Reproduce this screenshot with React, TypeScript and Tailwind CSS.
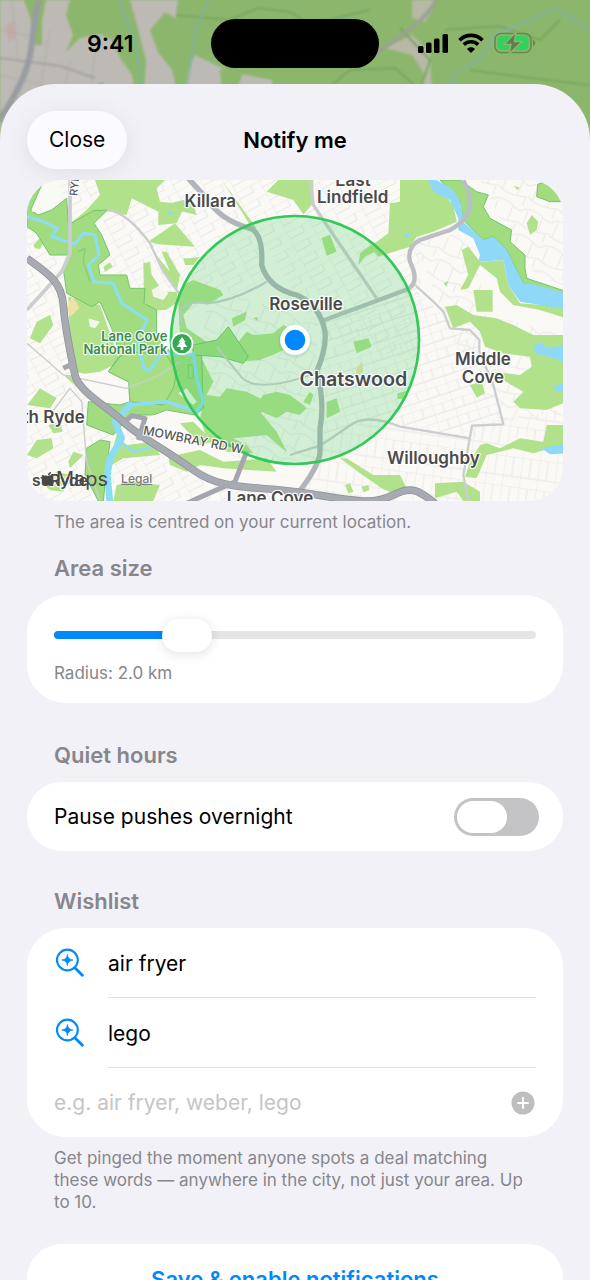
import React, { useState } from 'react';
import { FaApple } from 'react-icons/fa';

const STREET = '#e8e8e6';

const StatusMap: React.FC = () => (
  <svg viewBox="0 0 590 200" preserveAspectRatio="xMidYMin slice" className="absolute inset-x-0 top-0 h-[200px] w-full blur-[1px]" aria-hidden="true">
    <rect width="590" height="200" fill="#8db66d" />
    <path d="M0 0H178L175 22L195 55L230 72L272 80V200H0Z" fill="#bdbab5" />
    <path d="M0 75L90 96 M12 0L18 60 M50 30L40 90 M70 60L64 95 M95 50L90 95 M0 30L30 36" fill="none" stroke="#b0aeaa" strokeWidth="1" />
    <path d="M24 0H46L42 22V45H36L31 20Z M70 0H130L137 25L146 60L144 95H135L132 75L120 58L112 40L100 34L80 38L66 52L73 35L66 15Z" fill="#8db66d" />
    <path d="M150 30L165 12L178 20L195 20L212 36L195 55L188 70L185 95H178L172 70L158 52Z M220 70L245 68L235 95H222Z M96 84L104 82L102 88Z" fill="#8db66d" />
    <path d="M412 0H438L425 22L412 18Z M385 48L412 35L430 52L432 95H418L425 75L412 55Z" fill="#b7b8a6" />
    <path d="M176 15L230 20L258 8L290 12L310 24L370 10 M400 28L430 60L420 90 M470 70L530 78L590 85 M445 30L500 26L540 40L560 20 M320 95L350 70L395 68L420 90" fill="none" stroke="#78a75f" strokeWidth="2" />
    <path d="M118 0L135 40L143 95 M208 0L196 30L185 95 M590 30L555 8L535 18L495 35L480 60L452 75L455 95" fill="none" stroke="#80b4a0" strokeWidth="3" opacity="0.7" />
    <path d="M0 58L60 66L95 78" fill="none" stroke="#a3a3a4" strokeWidth="2" />
    <path d="M40 -4C30 28 36 50 22 80S4 112 -4 125" fill="none" stroke="#999ca0" strokeWidth="6" />
    <path d="M438 -4C430 18 402 35 370 58" fill="none" stroke="#9ba294" strokeWidth="4" />
    <path d="M6 25L14 20L16 38L8 42Z" fill="#c6a09c" opacity="0.5" />
  </svg>
);

const StatusBar: React.FC = () => (
  <div className="relative flex h-[84px] items-start justify-between pr-[54px] pl-[87px]">
    <span className="mt-[30px] text-[23px] leading-7 font-semibold text-black">9:41</span>
    <span className="absolute top-[19px] left-1/2 h-[49px] w-[168px] -translate-x-1/2 rounded-full bg-black" />
    <div className="mt-8 flex items-center gap-[10px]">
      <svg width="30" height="20" viewBox="0 0 30 20" aria-hidden="true">
        <rect x="0" y="13" width="5.5" height="7" rx="1.5" />
        <rect x="8" y="9.5" width="5.5" height="10.5" rx="1.5" />
        <rect x="16" y="5.5" width="5.5" height="14.5" rx="1.5" />
        <rect x="24.5" y="1" width="5.5" height="19" rx="1.5" />
      </svg>
      <svg width="26" height="20" viewBox="0 0 26 20" fill="none" stroke="black" aria-hidden="true">
        <path d="M1.5 7.2C8 .8 18 .8 24.5 7.2" strokeWidth="3.6" />
        <path d="M5.8 11.6C10 7.7 16 7.7 20.2 11.6" strokeWidth="3.6" />
        <path d="M13 20L9 16C11 13.8 15 13.8 17 16Z" fill="black" stroke="none" />
      </svg>
      <svg width="42" height="22" viewBox="0 0 42 22" aria-hidden="true">
        <rect x="1" y="1.5" width="36" height="19" rx="6" fill="none" stroke="#67884f" strokeWidth="1.6" />
        <rect x="3.5" y="4" width="31" height="14" rx="4" fill="#32d15c" />
        <path d="M39 8C42 9 42 13 39 14Z" fill="#67884f" />
        <path d="M22 0L10 12.5H17L15 22L28 9.5H20.5Z" fill="#5f7f4c" stroke="#8db66d" strokeWidth="1.4" />
      </svg>
    </div>
  </div>
);

const PLACES = [
  { name: 'Killara', x: 571, y: 96, size: 51 },
  { name: 'East', x: 999, y: 33, size: 51 },
  { name: 'Lindfield', x: 998, y: 84, size: 51 },
  { name: 'Roseville', x: 858, y: 404, size: 51 },
  { name: 'Chatswood', x: 1000, y: 634, size: 59 },
  { name: 'Middle', x: 1389, y: 571, size: 51 },
  { name: 'Cove', x: 1389, y: 625, size: 51 },
  { name: 'Willoughby', x: 1240, y: 867, size: 51 },
  { name: 'th Ryde', x: 101, y: 744, size: 51 },
  { name: 'st Ryde', x: 120, y: 932, size: 47 },
  { name: 'Lane Cove', x: 750, y: 986, size: 51 },
];

const AreaMap: React.FC<{ radius: number }> = ({ radius }) => (
  <div className="relative overflow-hidden rounded-[34px]">
    <svg viewBox="21 15 1608 963" className="block w-full" role="img" aria-label="Map of the area around your location">
      <defs>
        <pattern id="gridA" width="78" height="44" patternUnits="userSpaceOnUse" patternTransform="rotate(-28)">
          <path d="M0 0H78M0 22H50M0 0V44M50 0V22" fill="none" stroke={STREET} strokeWidth="3" />
        </pattern>
        <pattern id="gridB" width="64" height="52" patternUnits="userSpaceOnUse" patternTransform="rotate(-18)">
          <path d="M0 0H64M0 0V52M32 0V30M0 30H64" fill="none" stroke={STREET} strokeWidth="3" />
        </pattern>
        <pattern id="gridC" width="52" height="90" patternUnits="userSpaceOnUse" patternTransform="rotate(8)">
          <path d="M0 0H52M0 0V90M26 0V60M0 60H52" fill="none" stroke={STREET} strokeWidth="3" />
        </pattern>
        <pattern id="gridD" width="96" height="80" patternUnits="userSpaceOnUse" patternTransform="rotate(22)">
          <path d="M0 10Q30 -5 60 10T96 10M0 50Q30 70 96 50M14 10V56M62 10V60M88 56V90" fill="none" stroke={STREET} strokeWidth="3" />
        </pattern>
      </defs>

      <rect x="21" y="15" width="1608" height="963" fill="#faf9f5" />

      {/* residential streets */}
      <path d="M21 15H500L730 200L740 320L480 420L21 300Z" fill="url(#gridA)" />
      <path d="M500 15H1200V330L1190 560L900 480L730 200Z" fill="url(#gridA)" />
      <path d="M900 440L1180 340L1380 520L1450 750L1350 790L1030 730L900 800Z" fill="url(#gridB)" />
      <path d="M560 330L890 440V860L640 850L540 650Z" fill="url(#gridD)" />
      <path d="M890 800L1050 730L1350 790L1330 978H850Z" fill="url(#gridC)" />
      <path d="M1350 750L1640 700V978H1340Z" fill="url(#gridC)" />
      <path d="M1180 200L1350 170L1400 420L1640 480V720L1440 740L1290 460Z" fill="url(#gridD)" />
      <path d="M1380 15H1640V340L1520 280Z" fill="url(#gridD)" />
      <path d="M21 290L130 350L200 660L300 740L500 900L860 978H21Z" fill="url(#gridA)" />

      {/* parks */}
      <g fill="#b1e28b">
        <path d="M225 15L240 60L200 105L145 150L262 108L320 120L335 70L415 110V150L470 145L500 80L460 85L420 80L410 40L435 15Z" />
        <path d="M430 115L470 105L530 120L520 90L490 75L440 88Z" />
        <path d="M465 145L385 200L415 208L525 215Z" />
        <path d="M605 15L710 160L696 165L690 150L615 30Z" />
        <path d="M740 50L775 15H880V85L850 118L820 75Z" />
        <path d="M1140 15H1235L1300 90L1310 140L1240 170L1190 185L1170 215L1075 245L1050 215L1105 175L1110 85L1140 80Z" />
        <path d="M1015 270L1020 235L1060 205L1075 225L1035 245Z" />
        <path d="M905 190L930 180L950 230L920 242Z" />
        <path d="M1325 225L1345 215L1380 260L1450 255L1465 330L1500 385L1640 395V430L1560 405L1480 390L1440 350L1430 310L1380 270L1345 340L1320 345L1345 300Z" />
        <path d="M1360 345H1418V410H1370Z M1275 395L1310 390L1360 420L1430 430L1480 450L1540 480L1640 480V500L1640 680L1580 705L1500 700L1480 680L1510 650L1440 610L1420 590L1500 600L1535 575L1530 545L1450 535L1395 515L1380 470L1350 440L1300 460Z" />
        <path d="M1520 145L1535 120L1555 140L1550 165L1530 180Z M1480 32L1500 38L1492 45Z" />
        <path d="M1270 325L1285 318L1280 335Z M1350 630L1385 620L1395 655L1370 668Z M1580 750H1640V810L1590 820L1540 835L1480 820L1400 840L1370 910L1335 905L1350 860L1380 810L1400 805L1440 820L1500 790L1570 800Z" />
        <path d="M960 850L980 850L1060 900L1140 900L1160 940L1130 960L1085 940L1020 895Z M975 930L990 925L1000 950L985 955Z M1025 935L1045 930L1048 945L1030 952Z M1245 925L1330 920L1380 950V978H1330L1310 950L1245 970Z" />
        <path d="M370 265L390 260L395 300L430 350L470 350L475 380L430 410L390 400L372 380Z M400 230L430 290L470 350L480 300L440 230L425 230L450 290Z M490 250L510 250L540 245L520 270L495 270Z" />
        <path d="M490 330L520 315L600 345L610 360L570 385L520 385L490 420L500 460L560 500L640 520L680 470L700 480L760 475L790 450L810 460L800 520L770 535L720 555L650 560L580 530L540 540L580 620L560 660L600 665L620 640L680 650L740 680L720 720L650 780L600 760L540 700L540 560L480 480L475 380Z" />
        <path d="M635 430L680 410L675 435L640 455Z M700 430L712 425L714 438Z M810 660L850 690L860 700L840 720L800 710L770 730L700 700L730 660L770 650Z M850 680L870 690L880 660L870 650Z" />
        <path d="M550 690L600 700L640 740L720 710L770 770L800 830L780 815L740 780L640 790L680 810L700 835L620 830L560 790L540 730Z M480 745L520 740L580 800L540 810Z" />
        <path d="M250 275L270 262L278 275L255 290Z M40 210L60 190L70 205L60 222L45 220Z M145 365L240 390L300 560L240 590L170 600L150 500Z" />
        <path d="M30 490L50 440L90 420L100 450L60 505Z M130 600L170 600L195 640L170 635Z M22 690L60 640L110 670L90 700L60 695Z M85 750L120 740L128 770L100 775Z M21 840L50 795L95 790L100 820L50 850Z M160 830L190 840L150 880L145 860Z M60 920L110 890L150 900L130 950L90 945Z" />
        <path d="M445 845L540 825L610 860L740 850L770 890L610 880L540 870L500 890L450 870Z M275 870L310 850L420 840L400 800L320 810L290 780L270 850Z M290 930L330 920L420 930L400 978H280Z" />
        <path d="M1000 500L1045 490L1055 515L1010 535Z M920 680L950 670L960 710L920 730Z M1132 655L1158 648L1150 672H1132Z" />
      </g>

      {/* national park */}
      <g fill="#a2dc80" stroke="#74c46c" strokeWidth="3">
        <path d="M65 30L32 105L55 120L95 105L140 70L145 150L220 107L262 105L222 145L245 180L270 240L235 270L240 300L320 300L330 340L375 340L372 385L410 405V480L450 530L490 540H545L550 700L525 720L440 705L400 720L330 720L280 780L200 750L205 680L300 690L330 680L325 620L265 590L300 540L275 460L240 380L215 395L140 355L130 280L145 240L90 240L50 175L21 155V60Z" />
        <path d="M200 820L240 795L270 800L260 880L250 978H235L195 900Z" />
        <path d="M1260 15H1320L1370 50L1405 60L1390 95L1410 130L1475 165L1470 200L1515 240V280L1520 310L1640 350V358L1510 325L1460 225L1420 185L1390 195L1330 135L1320 80Z" />
        <path d="M1553 28L1590 15H1640V80H1590L1550 65Z" />
        <path d="M520 510L590 495L625 455L685 545L670 565L600 545L520 540Z" />
      </g>
      <path d="M155 365L172 385L178 400L150 425L140 400Z M1010 580L1025 560L1030 590L1005 610Z" fill="#eee3a6" />
      <path d="M70 30L35 110L75 108L130 60L110 15Z M205 430L240 440L225 460L210 455Z M415 405H445V460L460 480L440 530L412 480Z M475 655L500 640L530 680L520 690Z M395 345L420 330L445 355L430 375L400 365Z" fill="#faf9f5" opacity="0.9" />
      <path d="M300 545L330 530L440 540L470 590L460 640L430 690L330 680L325 620L265 590Z" fill="#a8df85" stroke="#74c46c" strokeWidth="3" />
      <path d="M165 590L325 622L325 665L270 665L200 650Z" fill="#faf9f5" />
      <path d="M380 725L430 715L480 745L470 800L420 800L375 770Z" fill="#faf9f5" />
      <path d="M505 570H520V610H505Z M175 230L195 220L190 260L210 320" fill="none" stroke="#7cc877" strokeWidth="4" opacity="0.7" />

      {/* water */}
      <g fill="none" stroke="#8ddcf5" strokeLinejoin="round" strokeLinecap="round">
        <path d="M21 125L70 140L112 160L95 185L165 207L190 175L225 180L237 240L205 270L222 320L280 325L305 385L382 435L370 460L350 480L372 580L388 588L425 535L520 540" strokeWidth="9" />
        <path d="M520 535L530 610L550 680L530 710L440 680L330 690" strokeWidth="11" />
        <path d="M330 690L285 740L305 790L270 850L262 900L270 985" strokeWidth="20" />
        <path d="M300 800L340 830L400 815L450 830" strokeWidth="7" />
      </g>
      <g fill="#8fd8f7">
        <path d="M1225 15L1240 50L1290 75L1315 130V165L1360 190L1380 240L1375 260L1450 255L1465 330L1500 380L1640 403V356L1550 330L1510 325L1460 225L1420 185L1390 195L1330 140L1325 90L1300 45L1250 15Z" />
        <path d="M1540 515L1560 500L1580 520L1640 510V565L1600 550L1545 535Z M1600 635L1640 620V650L1610 650Z M1565 820L1640 805V835L1590 838Z M1152 180L1165 172L1172 180L1158 190Z M440 112L455 108L460 118L448 120Z" />
      </g>

      {/* secondary roads */}
      <g fill="none" stroke="#cbcdd1" strokeLinejoin="round">
        <path d="M150 15V235L125 290L21 405" strokeWidth="11" />
        <path d="M262 105Q320 110 390 205L430 290L480 360" strokeWidth="7" />
        <path d="M870 15L880 90L920 150L1070 370" strokeWidth="10" />
        <path d="M1185 330L1240 380L1270 410L1290 460L1350 465L1378 495V530L1420 630L1450 748L1356 752L1330 900L1345 978" strokeWidth="7" />
        <path d="M480 450L485 400Q510 375 560 385Q640 380 740 320" strokeWidth="7" />
        <path d="M810 840L900 812L1000 745Q1050 718 1140 755L1350 790" strokeWidth="7" />
        <path d="M590 515L655 595Q690 655 840 610L900 590" strokeWidth="6" />
        <path d="M21 505L130 600L320 640L420 600L480 560 M90 720L150 640L185 680L200 860L240 978" strokeWidth="4" />
      </g>
      <path d="M900 440L1165 342Q1200 320 1170 260Q1160 215 1200 195L1290 165Q1370 120 1345 50L1330 15" fill="none" stroke="#bbbfc3" strokeWidth="13" />
      <path d="M505 10L560 70Q600 135 690 160Q730 175 725 270Q745 340 830 360Q900 390 915 470Q920 520 890 590Q915 680 900 760V830Q900 870 830 960" fill="none" stroke="#b1b5bb" strokeWidth="16" />

      {/* motorways */}
      <g fill="none" strokeLinejoin="round">
        <path d="M21 250C75 290 125 315 130 390S155 550 165 600S270 700 310 740S430 820 520 885S700 930 860 955S1060 990 1120 960S1200 950 1245 985" stroke="#92949c" strokeWidth="23" />
        <path d="M130 580L150 570L170 610 M320 735L335 722L375 730L355 795 M680 830L645 920L500 985" stroke="#a4a6ae" strokeWidth="15" />
        <path d="M21 250C75 290 125 315 130 390S155 550 165 600S270 700 310 740S430 820 520 885S700 930 860 955S1060 990 1120 960S1200 950 1245 985" stroke="#a8aab2" strokeWidth="18" />
      </g>

      <circle cx="825" cy="495" r={radius * 186} fill="#34c759" fillOpacity="0.2" stroke="#34c759" strokeWidth="8" />

      <g fontFamily="Inter, sans-serif" paintOrder="stroke" stroke="#ffffff" strokeOpacity="0.85" strokeLinejoin="round">
        {PLACES.map((p) => (
          <text key={p.name} x={p.x} y={p.y} fontSize={p.size} fontWeight="600" textAnchor="middle" fill="#4a4a4c" strokeWidth="8">
            {p.name}
          </text>
        ))}
        <g fontSize="39" fontWeight="600" textAnchor="end" fill="#378c50" strokeWidth="7">
          <text x="442" y="498">Lane Cove</text>
          <text x="442" y="538">National Park</text>
        </g>
        <text fontSize="37" fontWeight="500" fill="#58585b" strokeWidth="7" transform="translate(368 778) rotate(11)">MOWBRAY RD W</text>
        <text fontSize="33" fontWeight="500" fill="#58585b" strokeWidth="7" transform="translate(172 64) rotate(-84)">RYDE</text>
      </g>

      <circle cx="486" cy="506" r="34" fill="#fff" />
      <circle cx="486" cy="506" r="29" fill="#34a853" />
      <path d="M486 486L497 502H492L502 516H490V525H482V516H470L480 502H475Z" fill="#fff" />

      <circle cx="825" cy="499" r="50" fill="#000" opacity="0.06" />
      <circle cx="825" cy="495" r="45" fill="#fff" />
      <circle cx="825" cy="495" r="31" fill="#0088ff" />
    </svg>
    <div className="absolute bottom-2 left-[13px] flex items-center text-[#48484a]">
      <FaApple className="h-4 w-4" />
      <span className="text-xl leading-7">Maps</span>
      <a href="#legal" className="ml-[13px] text-xs font-medium text-[#7c7c80] underline">Legal</a>
    </div>
  </div>
);

const SearchSparkle: React.FC = () => (
  <svg width="30" height="30" viewBox="0 0 30 30" className="shrink-0 text-[#0088ff]" aria-hidden="true">
    <circle cx="13.4" cy="12" r="10.4" fill="none" stroke="currentColor" strokeWidth="2.1" />
    <path d="M21 20L28.4 27.2" stroke="currentColor" strokeWidth="2.8" strokeLinecap="round" />
    <path d="M13.4 6.4Q13.9 11.5 19 12Q13.9 12.5 13.4 17.6Q12.9 12.5 7.8 12Q12.9 11.5 13.4 6.4Z" fill="currentColor" stroke="currentColor" strokeWidth="0.7" />
  </svg>
);

const MIN_RADIUS = 0.5;
const MAX_RADIUS = 6.5;

export default function App() {
  const [radius, setRadius] = useState(2);
  const [quiet, setQuiet] = useState(false);
  const [words, setWords] = useState(['air fryer', 'lego']);
  const [draft, setDraft] = useState('');

  const percent = ((radius - MIN_RADIUS) / (MAX_RADIUS - MIN_RADIUS)) * 100;

  const addWord = () => {
    const word = draft.trim();
    if (!word || words.length >= 10) return;
    setWords([...words, word]);
    setDraft('');
  };

  return (
    <div className="relative flex h-screen flex-col overflow-hidden bg-[#8db66d] font-['Inter',sans-serif] text-[21px] leading-7 text-black">
      <StatusMap />
      <StatusBar />

      <main className="relative flex min-h-0 flex-1 flex-col rounded-t-[56px] bg-[#f2f1f8]">
        <header className="grid h-24 shrink-0 grid-cols-3 items-center px-[27px] pt-4">
          <button className="h-[58px] justify-self-start rounded-[29px] bg-[#fbfafe] px-[22px] shadow-[0_4px_24px_rgba(0,0,0,0.08)]">Close</button>
          <h1 className="text-center text-[22px] font-semibold">Notify me</h1>
        </header>

        <div className="flex-1 overflow-y-auto px-[27px] [scrollbar-width:none]">
          <AreaMap radius={radius} />
          <p className="mt-[10px] px-[27px] text-[17px] leading-[22px] text-[#86868b]">The area is centred on your current location.</p>

          <h2 className="mt-[21px] px-[27px] text-[22px] font-semibold text-[#86868b]">Area size</h2>
          <section className="mt-[13px] rounded-[38px] bg-white px-[27px] pt-6 pb-[19px]">
            <input
              id="radius"
              type="range"
              min={MIN_RADIUS}
              max={MAX_RADIUS}
              step={0.5}
              value={radius}
              onChange={(e) => setRadius(Number(e.target.value))}
              style={{ backgroundImage: `linear-gradient(to right, #0088ff ${percent}%, #e5e5e5 ${percent}%)` }}
              className="my-3 block h-2 w-full appearance-none rounded-full [&::-webkit-slider-thumb]:h-[33px] [&::-webkit-slider-thumb]:w-[50px] [&::-webkit-slider-thumb]:appearance-none [&::-webkit-slider-thumb]:rounded-full [&::-webkit-slider-thumb]:bg-white [&::-webkit-slider-thumb]:shadow-[0_2px_12px_rgba(0,0,0,0.12)]"
            />
            <label htmlFor="radius" className="mt-[23px] block text-[17px] leading-[22px] text-[#86868b]">Radius: {radius.toFixed(1)} km</label>
          </section>

          <h2 className="mt-[38px] px-[27px] text-[22px] font-semibold text-[#86868b]">Quiet hours</h2>
          <section className="mt-[13px] flex h-[69px] items-center justify-between rounded-[38px] bg-white pr-6 pl-[27px]">
            <label htmlFor="quiet">Pause pushes overnight</label>
            <input
              id="quiet"
              type="checkbox"
              role="switch"
              checked={quiet}
              onChange={(e) => setQuiet(e.target.checked)}
              className="h-[38px] w-[85px] appearance-none rounded-full bg-[#c4c4c6] p-[3px] before:block before:h-8 before:w-[50px] before:rounded-full before:bg-white checked:bg-[#34c759] checked:before:ml-auto"
            />
          </section>

          <h2 className="mt-9 px-[27px] text-[22px] font-semibold text-[#86868b]">Wishlist</h2>
          <section className="mt-[13px] rounded-[38px] bg-white px-[27px]">
            <ul>
              {words.map((word) => (
                <li key={word} className="flex items-center gap-6">
                  <SearchSparkle />
                  <span className="flex h-[70px] flex-1 items-center border-b border-[#e2e2e4] pt-[2px]">{word}</span>
                </li>
              ))}
            </ul>
            <div className="flex h-[69px] items-center gap-4">
              <input
                type="text"
                aria-label="Wishlist item"
                value={draft}
                onChange={(e) => setDraft(e.target.value)}
                placeholder="e.g. air fryer, weber, lego"
                className="min-w-0 flex-1 bg-transparent outline-none placeholder:text-[#c5c5c7]"
              />
              <button aria-label="Add" onClick={addWord}>
                <svg width="26" height="26" viewBox="0 0 26 26" className="block" aria-hidden="true">
                  <circle cx="13" cy="13" r="11.5" fill="#bebebe" />
                  <path d="M13 8V18M8 13H18" stroke="#fff" strokeWidth="2" strokeLinecap="round" />
                </svg>
              </button>
            </div>
          </section>
          <p className="mt-[10px] px-[27px] text-[17px] leading-[22px] text-[#86868b]">
            Get pinged the moment anyone spots a deal matching these words — anywhere in the city, not just your area. Up to 10.
          </p>

          <button className="mt-[31px] mb-10 h-[69px] w-full rounded-[38px] bg-white text-[22px] font-semibold text-[#0088ff]">Save &amp; enable notifications</button>
        </div>
      </main>
    </div>
  );
}
